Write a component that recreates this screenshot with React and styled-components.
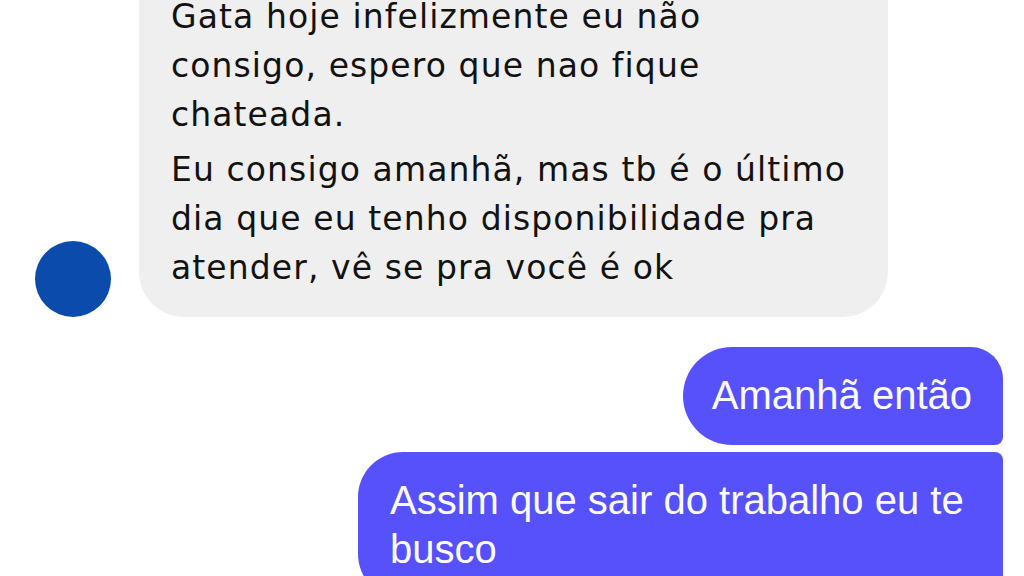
import React from "react";
import styled, { createGlobalStyle } from "styled-components";

const GlobalStyle = createGlobalStyle`
  html, body {
    margin: 0;
    padding: 0;
    background: #ffffff;
    overflow: hidden;
    height: 100%;
  }
  * { box-sizing: border-box; }
`;

const Thread = styled.div`
  display: flex;
  flex-direction: column;
  padding: 0 21px 0 35px;
  margin-top: -40px;
`;

const IncomingRow = styled.div`
  display: flex;
  align-items: flex-end;
  gap: 28px;
`;

const Avatar = styled.div`
  width: 76px;
  height: 76px;
  border-radius: 50%;
  background: #0a4bab;
  flex: none;
`;

const GreyBubble = styled.div`
  width: 749px;
  background: #efefef;
  border-radius: 45px;
  padding: 32px 37px 25px 32px;
  color: #121212;
  font-family: "DejaVu Sans", "Liberation Sans", sans-serif;
  font-size: 33px;
  letter-spacing: 1.1px;
  line-height: 49px;
`;

const Paragraph = styled.p`
  margin: 0;
  & + & {
    margin-top: 6px;
  }
`;

const OutgoingGroup = styled.div`
  display: flex;
  flex-direction: column;
  align-items: flex-end;
  gap: 7px;
  margin-top: 30px;
`;

const OutBubble = styled.div`
  max-width: 645px;
  background: #5651fa;
  color: #fbfbff;
  font-family: "Liberation Sans", Arial, sans-serif;
  font-size: 40px;
  line-height: 49px;
  padding: 24px 31px 25px ${(p) => p.$padLeft};
  border-radius: ${(p) => p.$corners};
`;

export default function App() {
  return (
    <>
      <GlobalStyle />
      <Thread>
        <IncomingRow>
          <Avatar />
          <GreyBubble>
            <Paragraph>
              Gata hoje infelizmente eu não consigo, espero que nao fique
              chateada.
            </Paragraph>
            <Paragraph>
              Eu consigo amanhã, mas tb é o último dia que eu tenho
              disponibilidade pra atender, vê se pra você é ok
            </Paragraph>
          </GreyBubble>
        </IncomingRow>
        <OutgoingGroup>
          <OutBubble $padLeft="29px" $corners="49px 32px 8px 49px">
            Amanhã então
          </OutBubble>
          <OutBubble $padLeft="32px" $corners="45px 8px 8px 45px">
            Assim que sair do trabalho eu te busco
          </OutBubble>
        </OutgoingGroup>
      </Thread>
    </>
  );
}
